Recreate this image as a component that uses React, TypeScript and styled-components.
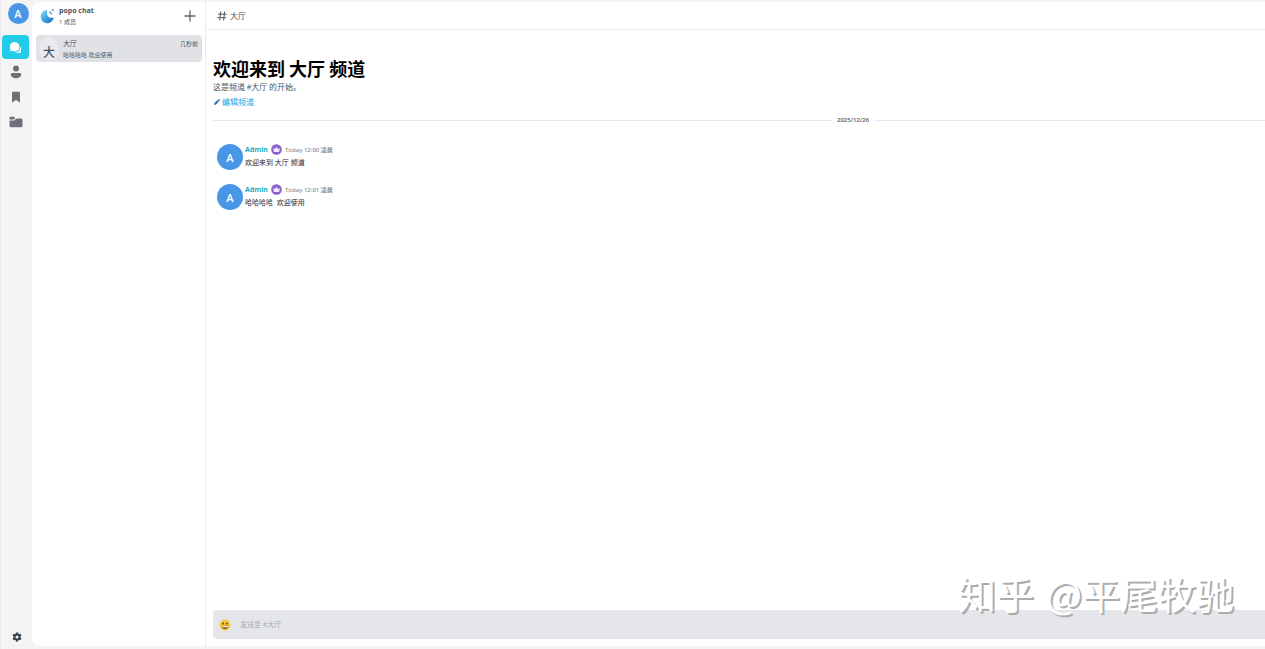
import React from "react";
import styled, { createGlobalStyle } from "styled-components";

const GlobalStyle = createGlobalStyle`
  *, *::before, *::after { box-sizing: border-box; }
  html, body, #root { height: 100%; margin: 0; }
  body {
    background: #f4f4f5;
    color: #4b5563;
    font-family: "Open Sans", "Noto Sans CJK SC", sans-serif;
    font-size: 7px;
    line-height: 10px;
    overflow: hidden;
  }
  h1, h2, p { margin: 0; font-size: inherit; font-weight: inherit; }
  button { border: 0; padding: 0; background: none; font: inherit; color: inherit; }
  a { color: inherit; text-decoration: none; }
  svg { display: block; flex: none; }
`;

const Shell = styled.div`
  position: relative;
  display: flex;
  height: 100%;
  padding: 2px 0 3px;
  border-left: 1px solid #ececee;
`;

const Rail = styled.nav`
  display: flex;
  flex-direction: column;
  align-items: center;
  width: 31px;
  flex: none;
  padding: 0 2px 4px 0;
`;

const Avatar = styled.span<{ $size: number }>`
  display: flex;
  align-items: center;
  justify-content: center;
  flex: none;
  width: ${(p) => p.$size}px;
  height: ${(p) => p.$size}px;
  padding-top: 1px;
  border-radius: 50%;
  background: #4a96e6;
  color: #fff;
  font-size: 11px;
  font-weight: 600;
`;

const ProfileButton = styled.button`
  margin: 1px 0 11px 5px;
`;

const RailLink = styled.a<{ $active?: boolean }>`
  display: flex;
  align-items: center;
  justify-content: center;
  width: 27px;
  height: ${(p) => (p.$active ? 24 : 25)}px;
  border-radius: 4px;
  background: ${(p) => (p.$active ? "#22cbe8" : "transparent")};
  color: ${(p) => (p.$active ? "#fff" : "#6f6f7a")};
`;

const SettingsButton = styled.button`
  margin: auto 0 0 2px;
  color: #374151;
`;

const Sidebar = styled.aside`
  width: 174px;
  flex: none;
  background: #fff;
  border-right: 1px solid #ebebed;
  border-radius: 8px 0 0 8px;
`;

const ServerHeader = styled.header`
  display: flex;
  align-items: center;
  height: 30px;
  padding: 0 9px 2px 8px;
`;

const ServerInfo = styled.div`
  flex: 1;
  margin-left: 4px;
`;

const ServerName = styled.h2`
  font-weight: 700;
  line-height: 12px;
`;

const Members = styled.p`
  font-size: 6px;
`;

const ChannelLink = styled.a`
  display: flex;
  align-items: center;
  height: 27px;
  margin: 3px 3px 0 4px;
  padding: 0 4px 0 3px;
  border-radius: 4px;
  background: #e1e2e6;
`;

const ChannelGlyph = styled.span`
  display: flex;
  align-items: center;
  justify-content: center;
  width: 20px;
  height: 24px;
  padding-top: 8px;
  border-radius: 50%;
  background: #e7eaee;
  font-size: 12px;
  font-weight: 500;
`;

const ChannelText = styled.div`
  flex: 1;
  margin-left: 4px;
`;

const ChannelRow = styled.div`
  display: flex;
  justify-content: space-between;
  line-height: 12px;
`;

const Small = styled.span`
  font-size: 6px;
`;

const Main = styled.main`
  display: flex;
  flex-direction: column;
  flex: 1;
  min-width: 0;
  background: #fff;
`;

const ChannelBar = styled.header`
  display: flex;
  align-items: center;
  gap: 3px;
  height: 28px;
  flex: none;
  padding-left: 11px;
  border-bottom: 1px solid #ececee;
  font-size: 8px;
`;

const Feed = styled.section`
  flex: 1;
  padding: 26px 0 0 7px;
`;

const Title = styled.h1`
  color: #000;
  font-family: "Noto Sans CJK SC", sans-serif;
  font-size: 18px;
  font-weight: 700;
  line-height: 24px;
`;

const Intro = styled.p`
  font-family: "Noto Sans CJK SC", sans-serif;
  font-size: 8px;
  line-height: 13px;
`;

const EditButton = styled.button`
  display: flex;
  align-items: center;
  gap: 2px;
  height: 18px;
  padding-left: 1px;
  font-size: 8px;
  color: #22a5e8;
`;

const DateDivider = styled.div`
  display: flex;
  align-items: center;
  gap: 5px;
  height: 18px;
  margin-bottom: 15px;
  font-size: 6px;
  font-weight: 600;
`;

const Rule = styled.span<{ $grow: number }>`
  flex: ${(p) => p.$grow} 1 0;
  height: 1px;
  background: #e8e9eb;
`;

const Message = styled.article`
  display: flex;
  gap: 2px;
  height: 27px;
  margin: 0 0 13px 4px;
`;

const MessageHead = styled.header`
  display: flex;
  align-items: center;
  gap: 3px;
  height: 11px;
`;

const Author = styled.strong`
  font-weight: 700;
  color: #1aa9c4;
`;

const Stamp = styled.time`
  font-size: 6px;
  font-weight: 600;
  color: #8d929b;
`;

const MessageText = styled.p`
  line-height: 15px;
  color: #1f2937;
  white-space: pre;
`;

const Composer = styled.form`
  display: flex;
  align-items: center;
  gap: 9px;
  height: 29px;
  flex: none;
  margin: 0 0 7px 7px;
  padding-left: 6px;
  border-radius: 4px 0 0 4px;
  background: #e4e6ea;
`;

const MessageInput = styled.input`
  flex: 1;
  min-width: 0;
  height: 16px;
  padding: 0;
  border: 0;
  outline: 0;
  background: transparent;
  font: inherit;
  &::placeholder { color: #a4aab4; opacity: 1; }
`;

const Watermark = styled.div`
  position: absolute;
  right: 31px;
  bottom: 32px;
  display: flex;
  gap: 12px;
  color: #fff;
  font-family: "Noto Sans CJK SC", sans-serif;
  font-size: 38px;
  line-height: 48px;
  text-shadow: 2px 2px 0 #adadad;
  white-space: nowrap;
  pointer-events: none;
`;

const ChatIcon = () => (
  <svg width="13" height="13" viewBox="0 0 13 13" fill="currentColor">
    <path d="M5.7 1a4.7 4.7 0 1 1-2.3 8.8L1 10.3l.5-2.4A4.7 4.7 0 0 1 5.7 1Z" />
    <path d="M11.2 5.2c1 1.1 1.2 2.800.6 4.100l.3 2.600-2.500-.4c-1.300.6-2.700.5-3.700-.2 3 .1 5.500-2.400 5.300-6.100Z" />
  </svg>
);

const PersonIcon = () => (
  <svg width="12" height="14" viewBox="0 0 12 14" fill="currentColor">
    <circle cx="6" cy="3.600" r="3" />
    <path d="M2.500 8h7c1 0 1.700.7 1.700 1.600C11.200 12 8.900 13.300 6 13.300S.8 12 .8 9.600C.8 8.700 1.500 8 2.500 8Z" />
  </svg>
);

const BookmarkIcon = () => (
  <svg width="10" height="12" viewBox="0 0 10 12" fill="currentColor">
    <path d="M1 2C1 1.200 1.600.7 2.300.7h5.400C8.400.7 9 1.200 9 2v9.500L5 8.900l-4 2.600Z" />
  </svg>
);

const FolderIcon = () => (
  <svg width="14" height="12" viewBox="0 0 14 12" fill="currentColor">
    <path d="M.5 2.200C.5 1.300 1.100.8 1.900.8h3L6.300 2 4.800 3.400H.5Z" />
    <path d="M.5 4.400h4.700l2.300-2h4.600c.8 0 1.400.6 1.400 1.400v6c0 .8-.6 1.400-1.400 1.400H1.900c-.8 0-1.400-.6-1.400-1.400Z" />
  </svg>
);

const GearIcon = () => (
  <svg width="10" height="10" viewBox="0 0 10 10">
    <g fill="currentColor">
      <rect x="3.800" y=".4" width="2.400" height="9.200" rx=".6" />
      <rect x="3.800" y=".4" width="2.400" height="9.200" rx=".6" transform="rotate(60 5 5)" />
      <rect x="3.800" y=".4" width="2.400" height="9.200" rx=".6" transform="rotate(120 5 5)" />
      <circle cx="5" cy="5" r="3.400" />
    </g>
    <circle cx="5" cy="5" r="1.500" fill="#f4f4f5" />
  </svg>
);

const Logo = () => (
  <svg width="15" height="16" viewBox="0 0 15 16">
    <defs>
      <linearGradient id="logoFill" x1="0" y1="0" x2="1" y2="1">
        <stop offset="0" stopColor="#9bdcf7" />
        <stop offset=".5" stopColor="#3aa5e6" />
        <stop offset="1" stopColor="#2562bd" />
      </linearGradient>
    </defs>
    <path d="M7.200 2C3.500 2 .7 4.900.7 8.500S3.500 15.200 7.200 15.200c3.300 0 6.200-2.400 6.500-6-1.600 1-4.200.9-5.500-.6C6.800 7 6.700 4.400 7.200 2Z" fill="url(#logoFill)" />
    <path d="M9.200 3.200c1-.2 1.900.4 2.100 1.500l1.300 1.500c-1.700.7-3.500-.7-3.400-3Z" fill="#4aa7df" />
    <path d="M11.500 1.200 14 .8l-.2 2.600c-1.200-.1-2.200-.9-2.300-2.200Z" fill="#76b5dd" />
  </svg>
);

const PlusIcon = () => (
  <svg width="12" height="12" viewBox="0 0 12 12" stroke="#5f636b" strokeWidth="1.300">
    <path d="M6 .5v11M.5 6h11" />
  </svg>
);

const HashIcon = () => (
  <svg width="10" height="10" viewBox="0 0 10 10" fill="none" stroke="#4b5563">
    <path d="M3.700.5 2.700 9.500M7.600.5l-1 9M1 3.200h8.500M.5 6.700H9" />
  </svg>
);

const PencilIcon = () => (
  <svg width="6" height="6" viewBox="0 0 6 6" fill="#2474bd">
    <path d="M.1 5.900.5 4 3.400 1.100l1.500 1.500L2 5.500ZM3.900.7l.5-.5c.3-.3.7-.2.900 0l.5.5c.3.300.3.700 0 1l-.5.5Z" />
  </svg>
);

const CrownBadge = () => (
  <svg width="11" height="11" viewBox="0 0 11 11" role="img" aria-label="owner">
    <circle cx="5.500" cy="5.500" r="5.300" fill="#8b5fd0" />
    <path d="M2.200 4 4 5l1.500-2.300L7 5l1.800-1-.7 4H2.900Z" fill="#f3ebff" />
  </svg>
);

const SmileIcon = () => (
  <svg width="12" height="12" viewBox="0 0 12 12">
    <circle cx="6" cy="6" r="5.400" fill="#f7c233" />
    <ellipse cx="4.200" cy="4.500" rx=".8" ry="1" fill="#5b3c14" />
    <ellipse cx="7.800" cy="4.500" rx=".8" ry="1" fill="#5b3c14" />
    <path d="M2.800 6.700h6.400C9 8.800 7.700 9.800 6 9.800S3 8.800 2.800 6.700Z" fill="#6b4317" />
    <path d="M3.200 6.900h5.600l-.4 1.300H3.600Z" fill="#fff" />
  </svg>
);

const messages = [
  { time: "Today 12:00 凌晨", text: "欢迎来到 大厅 频道" },
  { time: "Today 12:01 凌晨", text: "哈哈哈哈  欢迎使用" },
];

export default function App() {
  return (
    <>
      <GlobalStyle />
      <Shell>
        <Rail aria-label="Main">
          <ProfileButton type="button" aria-label="Profile">
            <Avatar $size={21}>A</Avatar>
          </ProfileButton>
          <RailLink href="#chats" aria-label="Chats" $active><ChatIcon /></RailLink>
          <RailLink href="#contacts" aria-label="Contacts"><PersonIcon /></RailLink>
          <RailLink href="#saved" aria-label="Saved"><BookmarkIcon /></RailLink>
          <RailLink href="#files" aria-label="Files"><FolderIcon /></RailLink>
          <SettingsButton type="button" aria-label="Settings"><GearIcon /></SettingsButton>
        </Rail>

        <Sidebar>
          <ServerHeader>
            <Logo />
            <ServerInfo>
              <ServerName>popo chat</ServerName>
              <Members>1 成员</Members>
            </ServerInfo>
            <button type="button" aria-label="Add"><PlusIcon /></button>
          </ServerHeader>
          <ChannelLink href="#lobby">
            <ChannelGlyph>大</ChannelGlyph>
            <ChannelText>
              <ChannelRow>
                <span>大厅</span>
                <Small>几秒前</Small>
              </ChannelRow>
              <Small as="p">哈哈哈哈 欢迎使用</Small>
            </ChannelText>
          </ChannelLink>
        </Sidebar>

        <Main>
          <ChannelBar>
            <HashIcon />
            <span>大厅</span>
          </ChannelBar>
          <Feed>
            <Title>欢迎来到 大厅 频道</Title>
            <Intro>这是频道 #大厅 的开始。</Intro>
            <EditButton type="button"><PencilIcon />编辑频道</EditButton>
            <DateDivider>
              <Rule $grow={19} />
              <time>2025/12/26</time>
              <Rule $grow={12} />
            </DateDivider>
            {messages.map((m) => (
              <Message key={m.time}>
                <Avatar $size={26}>A</Avatar>
                <div>
                  <MessageHead>
                    <Author>Admin</Author>
                    <CrownBadge />
                    <Stamp>{m.time}</Stamp>
                  </MessageHead>
                  <MessageText>{m.text}</MessageText>
                </div>
              </Message>
            ))}
          </Feed>
          <Composer onSubmit={(e) => e.preventDefault()}>
            <button type="button" aria-label="Emoji"><SmileIcon /></button>
            <MessageInput aria-label="Message" placeholder="发送至 #大厅" />
          </Composer>
        </Main>
        <Watermark>
          <span>知乎</span>
          <span>@平尾牧驰</span>
        </Watermark>
      </Shell>
    </>
  );
}
